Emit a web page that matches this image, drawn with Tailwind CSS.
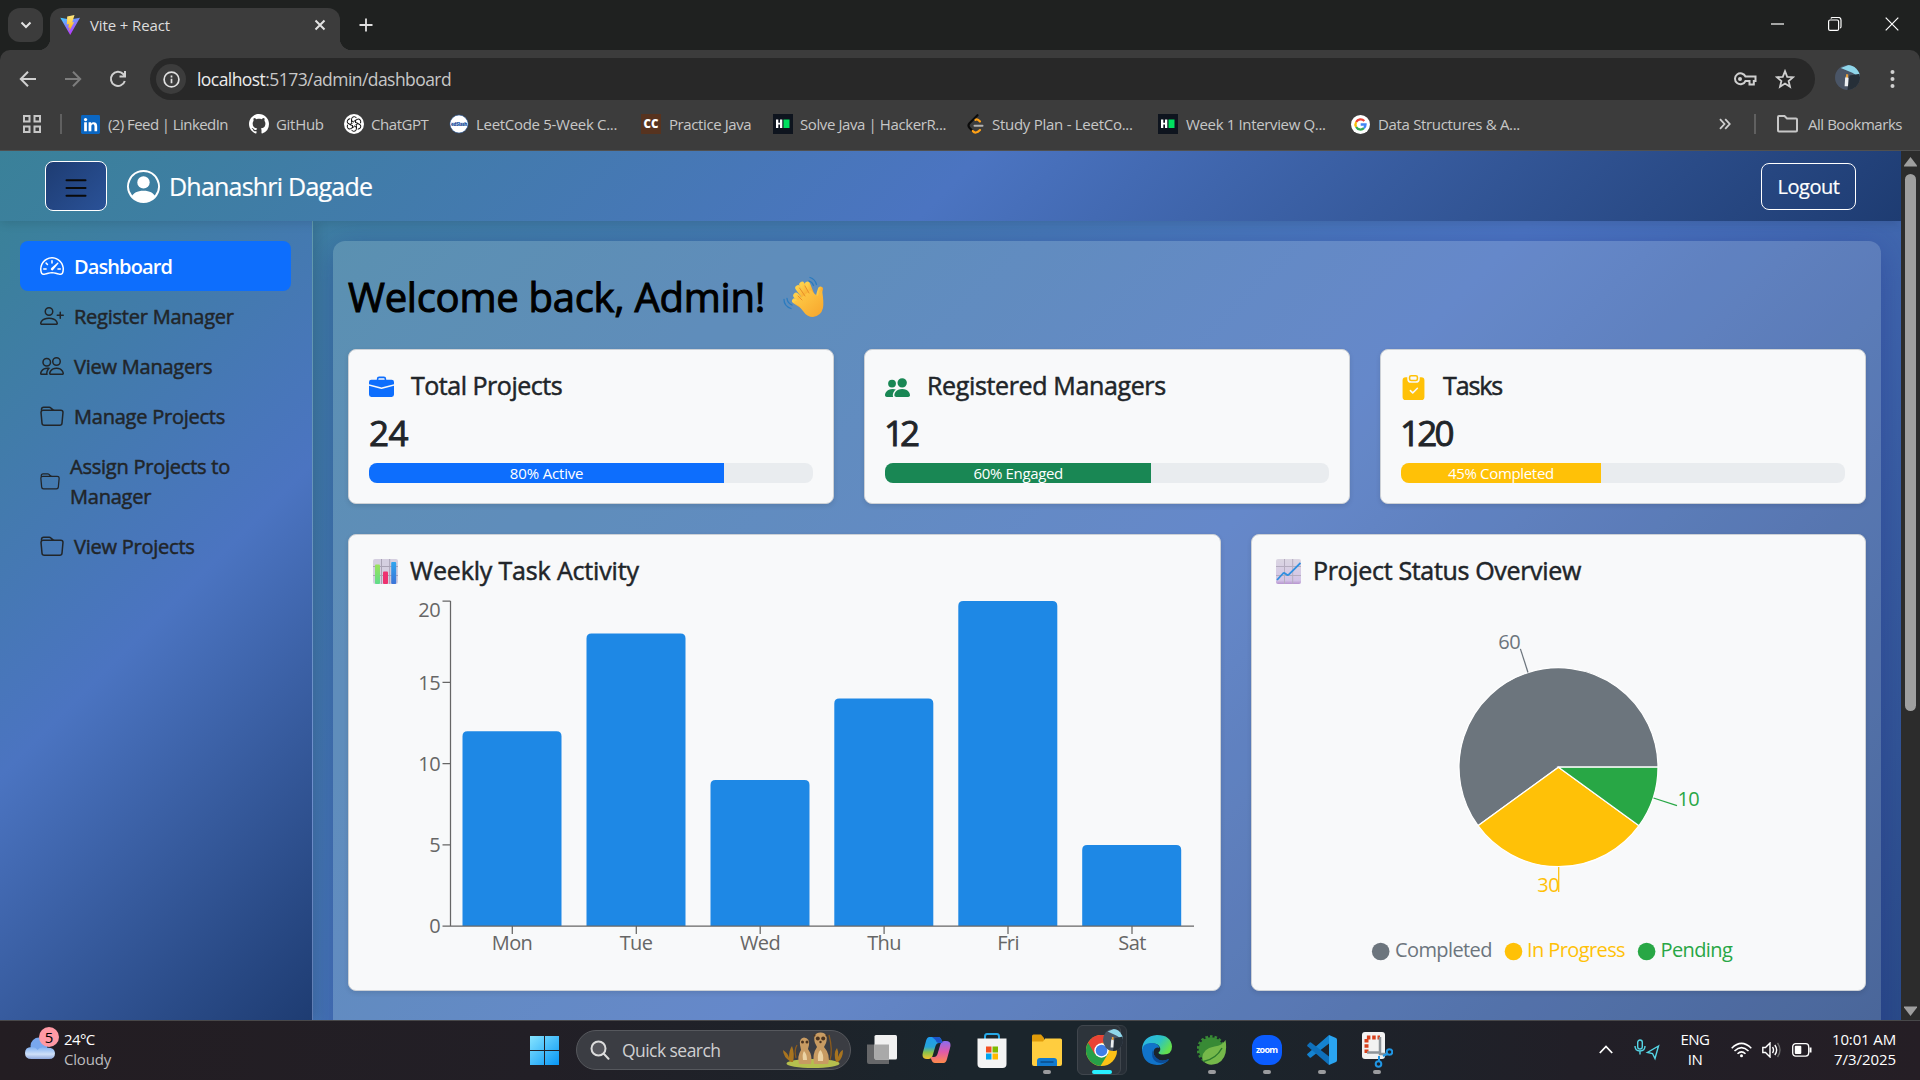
<!DOCTYPE html>
<html lang="en">
<head>
<meta charset="utf-8">
<title>Vite + React</title>
<script src="https://cdn.jsdelivr.net/npm/@tailwindcss/browser@4"></script>
</head>
<body class="w-[1920px] h-[1080px] overflow-hidden bg-[#1f2120] font-['Open_Sans',sans-serif]">
<svg width="0" height="0" class="absolute" aria-hidden="true">
  <defs>
    <symbol id="folder" viewBox="0 0 16 16"><path d="M.54 3.87.5 3a2 2 0 0 1 2-2h3.672a2 2 0 0 1 1.414.586l.828.828A2 2 0 0 0 9.828 3h3.982a2 2 0 0 1 1.992 2.181l-.637 7A2 2 0 0 1 13.174 14H2.826a2 2 0 0 1-1.991-1.819l-.637-7a2 2 0 0 1 .342-1.31zM2.19 4a1 1 0 0 0-.996 1.09l.637 7a1 1 0 0 0 .995.91h10.348a1 1 0 0 0 .995-.91l.637-7A1 1 0 0 0 13.81 4zm4.69-1.707A1 1 0 0 0 6.172 2H2.5a1 1 0 0 0-1 .981l.006.139q.323-.119.684-.12h5.396z"/></symbol>
    <symbol id="hackerrank" viewBox="0 0 20 20"><rect width="20" height="20" fill="#0e141e"/><path d="M3 5.500h2.300v3.200h1.700v-3.200h2.300v8.500h-2.300v-3.400h-1.700v3.400h-2.300z" fill="#fff"/><rect x="10.500" y="5.500" width="6" height="8.500" fill="#00e05f"/></symbol>
    <symbol id="avatar" viewBox="0 0 26 26"><clipPath id="avc"><circle cx="13" cy="13" r="13"/></clipPath><g clip-path="url(#avc)"><rect width="26" height="26" fill="#4a5566"/><path d="M6 3 14 0h12v13l-8-5z" fill="#8fd6ea"/><path d="M15 11 26 9v17H13z" fill="#262f38"/><path d="M10.500 14q1.500-5 3.500 0l-.5 8h-3.500z" fill="#eceff1"/><path d="M11.500 9.500h2.200v3.500h-2.200z" fill="#e9a13b"/></g></symbol>
  </defs>
</svg>
<div class="flex flex-col w-full h-full">

  <!-- Tab strip -->
  <div class="flex h-[50px] shrink-0 pl-2 pt-2 text-[#dedede]">
    <div class="w-[35px] h-[34px] rounded-xl bg-[#3c3c3c] grid place-items-center"><svg width="12" height="8" viewBox="0 0 12 8" fill="none" stroke="#e3e3e3" stroke-width="2"><path d="M1.500 1.500 6 6l4.500-4.500"/></svg></div>
    <div class="relative ml-[7px] w-[290px] h-[42px] rounded-t-xl bg-[#3c3c3c] flex items-center pl-2.5 pr-[14px] pb-2">
      <div class="absolute -left-3 bottom-0 size-3 bg-[radial-gradient(circle_at_0_0,transparent_12px,#3c3c3c_12.500px)]"></div>
      <div class="absolute -right-3 bottom-0 size-3 bg-[radial-gradient(circle_at_100%_0,transparent_12px,#3c3c3c_12.500px)]"></div>
      <svg width="20" height="20" viewBox="0 0 20 20"><defs><linearGradient id="v1" x1="0" y1="0" x2=".5" y2="1"><stop stop-color="#41d1ff"/><stop offset="1" stop-color="#bd34fe"/></linearGradient><linearGradient id="v2" x1="0" y1="0" x2="0" y2="1"><stop stop-color="#ffea83"/><stop offset="1" stop-color="#ffa800"/></linearGradient></defs><path d="M.3 2.700 10.200 20 20 2.700 10.200 4.500z" fill="url(#v1)"/><path d="M14.500 0 7.200 1.400 6.800 9.500l2.100-.4-.6 3.700 1.500-.4-.8 4.200 5.200-9.600-2 .4z" fill="url(#v2)"/></svg>
      <span class="ml-2.5 text-[15px] tracking-[-.12px]">Vite + React</span>
      <svg class="ml-auto" width="12" height="12" viewBox="0 0 12 12" stroke="#e3e3e3" stroke-width="2"><path d="m1.500 1.500 9 9m0-9-9 9"/></svg>
    </div>
    <svg class="ml-[19px] mt-[10px]" width="14" height="14" viewBox="0 0 14 14" stroke="#e0e0e0" stroke-width="1.800"><path d="M7 .5v13M.5 7h13"/></svg>
    <div class="ml-auto flex gap-[43px] pr-[21px] pt-[9px]" >
      <svg width="14" height="14" viewBox="0 0 14 14"><path d="M0 7h13" stroke="#fff" stroke-width="1.200"/></svg>
      <svg width="14" height="14" viewBox="0 0 14 14" fill="none" stroke="#fff" stroke-width="1.200"><rect x=".6" y="3" width="10" height="10.400" rx="1.500"/><path d="M3 1.500q.3-1 1.500-1h6q2.500 0 2.500 2.500v6.500q0 1.500-1 1.500"/></svg>
      <svg width="14" height="14" viewBox="0 0 14 14" stroke="#fff" stroke-width="1.200"><path d="m.7.7 12.600 12.600m0-12.600L.7 13.300"/></svg>
    </div>
  </div>

  <!-- Toolbar -->
  <div class="flex h-[54px] shrink-0 items-start pt-2 pl-[19px] bg-[#3c3c3c] rounded-t-[10px]">
    <div class="flex items-center h-[42px] gap-[27px]">
      <svg width="18" height="18" viewBox="0 0 18 18" fill="none" stroke="#d0d0d0" stroke-width="2"><path d="M17 9H2.500M9 1.700 1.800 9 9 16.300"/></svg>
      <svg width="18" height="18" viewBox="0 0 18 18" fill="none" stroke="#7d7d7d" stroke-width="2"><path d="M1 9h14.500M9 1.700 16.200 9 9 16.300"/></svg>
      <svg width="18" height="18" viewBox="0 0 18 18" fill="none" stroke="#d0d0d0" stroke-width="2"><path d="M15.800 11A7.100 7.100 0 1 1 14.200 4l2 2.200M16 1v5.500h-5.500"/></svg>
    </div>
    <div class="ml-[23px] w-[1665px] h-[42px] rounded-full bg-[#282828] flex items-center pl-1.5 pr-[20px]">
      <div class="size-[30px] rounded-full bg-[#3c3c3c] grid place-items-center"><svg width="17" height="17" viewBox="0 0 17 17" fill="none" stroke="#e0e0e0" stroke-width="1.700"><circle cx="8.500" cy="8.500" r="7.400"/><path d="M8.500 7.700v4.600M8.500 4.500v1.900"/></svg></div>
      <div class="ml-[11px] text-[17.5px] tracking-[-.56px] text-[#c7c7c7] whitespace-nowrap"><span class="text-[#ececec]">localhost</span>:5173/admin/dashboard</div>
      <svg class="ml-auto" width="24" height="18" viewBox="0 0 24 18" fill="none" stroke="#d0d0d0" stroke-width="2"><path d="M12.500 6.500h10v4.500h-1.700v3.500h-4.300V11h-4a5.500 5.500 0 1 1 0-4.500z"/><circle cx="7" cy="9" r="2" fill="#d0d0d0" stroke="none"/></svg>
      <svg class="ml-[18px]" width="20" height="20" viewBox="0 0 20 20" fill="none" stroke="#d0d0d0" stroke-width="1.800"><path d="m10 2.200 2.200 5.600 5.900.4-4.500 3.800 1.400 5.800-5-3.200-5 3.200L6.400 12 1.900 8.200l5.900-.4z"/></svg>
    </div>
    <svg class="ml-5 mt-[7px]" width="25" height="25"><use href="#avatar"/></svg>
    <svg class="ml-[30px] mt-[11px]" width="5" height="20" viewBox="0 0 5 20" fill="#d0d0d0"><circle cx="2.500" cy="3" r="2"/><circle cx="2.500" cy="10" r="2"/><circle cx="2.500" cy="17" r="2"/></svg>
  </div>

  <!-- Bookmarks bar -->
  <div class="flex h-[47px] shrink-0 items-center pb-1.5 pl-[23px] pr-[18px] bg-[#3c3c3c] border-b border-[#505050] text-[15px] text-[#c7c7c7] whitespace-nowrap">
    <svg width="18" height="18" viewBox="0 0 18 18" fill="none" stroke="#c7c7c7" stroke-width="2"><path d="M1 1h5.500v5.500H1zM11.500 1H17v5.500h-5.500zM1 11.500h5.500V17H1zM11.500 11.500H17V17h-5.500z"/></svg>
    <div class="ml-[19px] mr-[19px] w-0.5 h-5 bg-[#606060]"></div>
    <div class="flex items-center gap-2 w-[168px] tracking-[-.57px]"><svg width="19" height="19" viewBox="0 0 20 20"><rect width="20" height="20" rx="1.500" fill="#0a66c2"/><g fill="#fff"><circle cx="4.800" cy="4.800" r="1.700"/><path d="M3.300 7.700h2.900V17H3.300zM8 7.700h2.700v1.300c1.300-2.300 6.300-2.200 6.300 2.200V17h-2.800v-5c0-3-3.300-2.700-3.300 0v5H8z"/></g></svg>(2) Feed | LinkedIn</div>
    <div class="flex items-center gap-[7px] w-[95px] tracking-[-.3px]"><svg width="20" height="20" viewBox="0 0 16 16" fill="#fff"><path d="M8 0C3.580 0 0 3.580 0 8c0 3.540 2.290 6.530 5.470 7.590.4.070.55-.17.55-.38 0-.19-.01-.82-.01-1.490-2.010.37-2.530-.49-2.690-.94-.09-.23-.48-.94-.82-1.130-.28-.15-.68-.52-.01-.53.63-.01 1.080.58 1.230.82.72 1.210 1.870.87 2.330.66.07-.52.28-.87.51-1.070-1.780-.2-3.640-.89-3.640-3.950 0-.87.31-1.590.82-2.150-.08-.2-.36-1.020.08-2.120 0 0 .67-.21 2.200.82.64-.18 1.320-.27 2-.27s1.360.09 2 .27c1.530-1.040 2.200-.82 2.200-.82.44 1.100.16 1.920.08 2.120.51.56.82 1.270.82 2.150 0 3.070-1.870 3.750-3.650 3.950.29.25.54.73.54 1.480 0 1.070-.01 1.930-.01 2.200 0 .21.15.46.55.38A8 8 0 0 0 16 8c0-4.420-3.580-8-8-8"/></svg>GitHub</div>
    <div class="flex items-center gap-[7px] w-[105px] tracking-[-.45px]"><svg width="20" height="20" viewBox="0 0 20 20"><circle cx="10" cy="10" r="10" fill="#fff"/><g fill="none" stroke="#111" stroke-width="1"><g id="petal"><path d="M10 8.200 7.600 6.800V4.900q.3-2.600 3-2.200 1.300.3 2 1.500M7.600 8.800V6"/></g><use href="#petal" transform="rotate(60 10 10)"/><use href="#petal" transform="rotate(120 10 10)"/><use href="#petal" transform="rotate(180 10 10)"/><use href="#petal" transform="rotate(240 10 10)"/><use href="#petal" transform="rotate(300 10 10)"/></g></svg>ChatGPT</div>
    <div class="flex items-center gap-[7px] w-[192px] tracking-[-.3px]"><svg width="20" height="20" viewBox="0 0 20 20"><circle cx="10" cy="10" r="9" fill="#fff" stroke="#2d5fa4" stroke-width=".6"/><path d="M1.500 8.200h17v3h-17z" fill="#dce9f7"/><text x="10" y="11.500" text-anchor="middle" font-size="4.500" font-weight="800" fill="#1d4e9c">edSlash</text></svg>LeetCode 5-Week C...</div>
    <div class="flex items-center gap-2 w-[132px] tracking-[-.4px]"><svg width="20" height="20" viewBox="0 0 20 20"><rect width="20" height="20" fill="#57331f"/><text x="10" y="14" text-anchor="middle" font-size="11.500" font-weight="800" fill="#fff" letter-spacing="0">CC</text></svg>Practice Java</div>
    <div class="flex items-center gap-[7px] w-[193px] tracking-[-.4px]"><svg width="20" height="20"><use href="#hackerrank"/></svg>Solve Java | HackerR...</div>
    <div class="flex items-center gap-[6px] w-[192px] tracking-[-.27px]"><svg width="20" height="20" viewBox="0 0 20 20" fill="none" stroke-width="2.200" stroke-linecap="round"><path d="M11.500 1.200 3.500 9.300Q1.500 11.500 3.500 13.800l3 3.200" stroke="#0b0b0b"/><path d="M9.500 5.800q2-1.300 4.500 1.700M6.700 17q3 3.500 7.300-1" stroke="#ffa116"/><path d="M8.500 11.700h8" stroke="#b3b3b3" stroke-width="2"/></svg>Study Plan - LeetCo...</div>
    <div class="flex items-center gap-2 w-[193px] tracking-[-.35px]"><svg width="20" height="20"><use href="#hackerrank"/></svg>Week 1 Interview Q...</div>
    <div class="flex items-center gap-2 tracking-[-.33px]"><svg width="19" height="19" viewBox="0 0 20 20" fill="none" stroke-width="2.400"><circle cx="10" cy="10" r="10" fill="#fff"/><path d="M14 6.300A5.300 5.300 0 0 0 5.400 7.400" stroke="#ea4335"/><path d="M5.400 7.400a5.300 5.300 0 0 0 0 5.200" stroke="#fbbc05"/><path d="M5.400 12.600a5.300 5.300 0 0 0 8.200 1.300" stroke="#34a853"/><path d="M13.600 13.900A5.300 5.300 0 0 0 15.300 10H10.200" stroke="#4285f4"/></svg>Data Structures &amp; A...</div>
    <svg class="ml-auto" width="12" height="12" viewBox="0 0 12 12" fill="none" stroke="#d0d0d0" stroke-width="1.800"><path d="m1 1.200 4.500 4.800L1 10.800M6.200 1.200 10.700 6l-4.500 4.800"/></svg>
    <div class="ml-[23px] mr-[21px] w-0.5 h-5 bg-[#606060]"></div>
    <svg class="mr-2.5" width="21" height="18" viewBox="0 0 21 18" fill="none" stroke="#c7c7c7" stroke-width="2"><path d="M1 2q0-1 1-1h5.500l2.500 2.500h9q1 0 1 1V15.500q0 1-1 1H2q-1 0-1-1z"/></svg>
    <span class="tracking-[-.46px]">All Bookmarks</span>
  </div>

  <!-- Web page -->
  <div class="flex h-[869px] shrink-0">
    <div class="w-[1901px] h-full flex flex-col overflow-hidden bg-[linear-gradient(135deg,#3a8199_0px,#4b74c1_1134px,#1e3c72_2268px)]">
      <header class="relative z-20 h-[70px] shrink-0 flex items-center px-[45px] text-white bg-[linear-gradient(135deg,#3a8199,#4b74c1,#1e3c72)] shadow-[0_2px_10px_rgba(0,0,0,.12)]">
        <button class="w-[62px] h-[50px] rounded-lg border border-white bg-[linear-gradient(135deg,#1e3c72,#2a5298)] grid place-items-center"><svg class="mt-1" width="22" height="18" viewBox="0 0 22 18" stroke="#0a0a0a" stroke-width="2" stroke-linecap="round"><path d="M1.500 1.200h19M1.500 9h19M1.500 16.800h19"/></svg></button>
        <svg class="ml-5" width="33" height="33" viewBox="0 0 16 16" fill="#fff"><path d="M11 6a3 3 0 1 1-6 0 3 3 0 0 1 6 0"/><path fill-rule="evenodd" d="M0 8a8 8 0 1 1 16 0A8 8 0 0 1 0 8m8-7a7 7 0 0 0-5.468 11.370C3.242 11.226 4.805 10 8 10s4.757 1.225 5.468 2.370A7 7 0 0 0 8 1"/></svg>
        <span class="ml-[9px] text-[25px] tracking-[-.78px] pt-0.5 [-webkit-text-stroke:0.2px]">Dhanashri Dagade</span>
        <button class="ml-auto w-[95px] h-[47px] pt-0.5 rounded-lg border border-white text-[20px] tracking-[-.46px] [-webkit-text-stroke:0.2px]">Logout</button>
      </header>
      <div class="flex flex-1 min-h-0">
        <nav class="relative z-10 w-[313px] shrink-0 border-r border-white/20 px-5 pt-5 bg-[linear-gradient(135deg,#3a8199,#4b74c1,#1e3c72)] shadow-[4px_0_12px_rgba(0,0,0,.12)] text-[20px] leading-[30px] font-medium tracking-[-.23px] text-[#212529] fill-[#212529] [-webkit-text-stroke:0.5px]">
          <a class="flex items-center gap-2.5 h-[50px] w-[271px] px-5 rounded-lg bg-[#0d6efd] text-white fill-white font-semibold tracking-[-.9px] [-webkit-text-stroke:0px]"><svg width="24" height="24" viewBox="0 0 16 16"><path d="M8 4a.5.5 0 0 1 .5.5V6a.5.5 0 0 1-1 0V4.500A.5.5 0 0 1 8 4M3.732 5.732a.5.5 0 0 1 .707 0l.915.914a.5.5 0 1 1-.708.708l-.914-.915a.5.5 0 0 1 0-.707M2 10a.5.5 0 0 1 .5-.5h1.586a.5.5 0 0 1 0 1H2.500A.5.5 0 0 1 2 10m9.500 0a.5.5 0 0 1 .5-.5h1.500a.5.5 0 0 1 0 1H12a.5.5 0 0 1-.5-.5m.754-4.246a.39.39 0 0 0-.527-.02L7.547 9.310a.91.91 0 1 0 1.302 1.258l3.434-4.297a.39.39 0 0 0-.029-.518z"/><path fill-rule="evenodd" d="M0 10a8 8 0 1 1 15.547 2.661c-.442 1.253-1.845 1.602-2.932 1.250C11.309 13.488 9.475 13 8 13c-1.474 0-3.310.488-4.615.911-1.087.352-2.490.003-2.932-1.250A8 8 0 0 1 0 10m8-7a7 7 0 0 0-6.603 9.329c.203.575.923.876 1.680.63C4.397 12.533 6.358 12 8 12s3.604.532 4.923.96c.757.245 1.477-.056 1.680-.631A7 7 0 0 0 8 3"/></svg><span class="pt-0.5">Dashboard</span></a>
          <a class="flex items-center gap-2.5 h-[50px] px-5"><svg width="24" height="24" viewBox="0 0 16 16"><path d="M6 8a3 3 0 1 0 0-6 3 3 0 0 0 0 6m2-3a2 2 0 1 1-4 0 2 2 0 0 1 4 0m4 8c0 1-1 1-1 1H1s-1 0-1-1 1-4 6-4 6 3 6 4m-1-.004c-.001-.246-.154-.986-.832-1.664C9.516 10.680 8.289 10 6 10s-3.516.68-4.168 1.332c-.678.678-.83 1.418-.832 1.664z"/><path d="M13.500 5a.5.5 0 0 1 .5.5V7h1.500a.5.5 0 0 1 0 1H14v1.500a.5.5 0 0 1-1 0V8h-1.500a.5.5 0 0 1 0-1H13V5.500a.5.5 0 0 1 .5-.5"/></svg><span class="pt-0.5">Register Manager</span></a>
          <a class="flex items-center gap-2.5 h-[50px] px-5"><svg width="24" height="24" viewBox="0 0 16 16"><path d="M15 14s1 0 1-1-1-4-5-4-5 3-5 4 1 1 1 1zm-7.978-1L7 12.996c.001-.264.167-1.030.76-1.720C8.312 10.629 9.282 10 11 10c1.717 0 2.687.63 3.240 1.276.593.69.758 1.457.76 1.720l-.008.002-.014.002zM11 7a2 2 0 1 0 0-4 2 2 0 0 0 0 4m3-2a3 3 0 1 1-6 0 3 3 0 0 1 6 0M6.936 9.280a6 6 0 0 0-1.230-.247A7 7 0 0 0 5 9c-4 0-5 3-5 4q0 1 1 1h4.216A2.240 2.240 0 0 1 5 13c0-1.010.377-2.042 1.090-2.904.243-.294.526-.569.846-.816M4.920 10A5.500 5.500 0 0 0 4 13H1c0-.26.164-1.030.76-1.724.545-.636 1.492-1.256 3.160-1.275ZM1.500 5.500a3 3 0 1 1 6 0 3 3 0 0 1-6 0m3-2a2 2 0 1 0 0 4 2 2 0 0 0 0-4"/></svg><span class="pt-0.5">View Managers</span></a>
          <a class="flex items-center gap-2.5 h-[50px] px-5"><svg class="mt-0.5" width="24" height="24"><use href="#folder"/></svg><span class="pt-0.5">Manage Projects</span></a>
          <a class="flex items-center gap-2.5 h-20 px-5"><svg class="shrink-0 mt-0.5" width="20" height="20"><use href="#folder"/></svg><span class="pt-0.5">Assign Projects to<br>Manager</span></a>
          <a class="flex items-center gap-2.5 h-[50px] px-5"><svg class="mt-0.5" width="24" height="24"><use href="#folder"/></svg><span class="pt-0.5">View Projects</span></a>
        </nav>
        <main class="flex-1 min-w-0 pt-5 px-5 text-[#212529] font-medium">
          <section class="h-[860px] rounded-xl bg-white/15 px-[15px] pt-8 shadow-[0_8px_32px_rgba(31,38,135,.37)]">
            <h1 class="h-12 flex items-center text-[40px] leading-[48px] tracking-[-.26px] text-black [-webkit-text-stroke:1px]">Welcome back, Admin! <span class="ml-[18px]">
              <svg width="41" height="42" viewBox="0 0 41 42" fill="none" stroke-linecap="round"><defs><linearGradient id="hg" x1="0" y1="0" x2="1" y2="1"><stop stop-color="#ffd04a"/><stop offset="1" stop-color="#f7a42c"/></linearGradient></defs><g stroke="#2b7bbf" stroke-width="1.300"><path d="M27 1.500q5 1.500 6.500 7M26 5q3.500 1 4.500 4.500M1 23.500q0 6.500 7 9M4 22.500q.5 4.500 5 6.500"/></g><g stroke="url(#hg)"><path d="m20 27-7-7.500" stroke-width="5.500"/><path d="m23 23-8-11" stroke-width="5.500"/><path d="m26 20-7-11.500" stroke-width="5.500"/><path d="m29 19-4.500-11" stroke-width="5"/><path d="M35 23q1-6 2.500-10" stroke-width="5"/><path d="m19 30-7.500-5" stroke-width="5"/></g><path d="M15 24 28 14q4 5 7 6l4-6q2 12 1 18-2 8-10 9-6 0-10-6-3-5-9-9z" fill="url(#hg)"/><g stroke="#e8902a" stroke-width="1"><path d="m22 20-5.500-8M26 17l-4-7M19 24l-4-4"/></g></svg></span></h1>
            <div class="mt-7 grid grid-cols-3 gap-[30px]">
              <div class="h-[155px] rounded-lg border border-[#cdd1d6] bg-[#f8f9fa] p-5 shadow-[0_2px_5px_rgba(0,0,0,.1)]">
                <h5 class="flex items-center text-[25px] leading-[30px] tracking-[-.48px] [-webkit-text-stroke:0.5px]"><svg class="mt-[5px] mr-[17px]" width="25" height="25" viewBox="0 0 16 16" fill="#0d6efd"><path d="M6.500 1A1.500 1.500 0 0 0 5 2.500V3H1.500A1.500 1.500 0 0 0 0 4.500v1.384l7.614 2.030a1.500 1.500 0 0 0 .772 0L16 5.884V4.500A1.500 1.500 0 0 0 14.500 3H11v-.5A1.500 1.500 0 0 0 9.500 1zm0 1h3a.5.5 0 0 1 .5.5V3H6v-.5a.5.5 0 0 1 .5-.5"/><path d="M0 12.500A1.500 1.500 0 0 0 1.500 14h13a1.500 1.500 0 0 0 1.500-1.500V6.850L8.129 8.947a.5.5 0 0 1-.258 0L0 6.850z"/></svg>Total Projects</h5>
                <div class="mt-3 text-[35px] leading-[42px] tracking-[-.5px] [-webkit-text-stroke:0.9px]">24</div>
                <div class="mt-[9px] h-5 rounded-lg bg-[#e9ecef] overflow-hidden"><div class="h-full bg-[#0d6efd] text-white text-[15px] leading-5 font-normal text-center tracking-[-.17px]" style="width:80%">80% Active</div></div>
              </div>
              <div class="h-[155px] rounded-lg border border-[#cdd1d6] bg-[#f8f9fa] p-5 shadow-[0_2px_5px_rgba(0,0,0,.1)]">
                <h5 class="flex items-center text-[25px] leading-[30px] tracking-[-.36px] [-webkit-text-stroke:0.5px]"><svg class="mt-[5px] mr-[17px]" width="25" height="25" viewBox="0 0 16 16" fill="#198754"><path d="M7 14s-1 0-1-1 1-4 5-4 5 3 5 4-1 1-1 1zm4-6a3 3 0 1 0 0-6 3 3 0 0 0 0 6m-5.784 6A2.240 2.240 0 0 1 5 13c0-1.355.68-2.750 1.936-3.720A6.300 6.300 0 0 0 5 9c-4 0-5 3-5 4s1 1 1 1zM4.500 8a2.500 2.500 0 1 0 0-5 2.500 2.500 0 0 0 0 5"/></svg>Registered Managers</h5>
                <div class="mt-3 -ml-px text-[35px] leading-[42px] tracking-[-4px] [-webkit-text-stroke:0.9px]">12</div>
                <div class="mt-[9px] h-5 rounded-lg bg-[#e9ecef] overflow-hidden"><div class="h-full bg-[#198754] text-white text-[15px] leading-5 font-normal text-center tracking-[-.33px]" style="width:60%">60% Engaged</div></div>
              </div>
              <div class="h-[155px] rounded-lg border border-[#cdd1d6] bg-[#f8f9fa] p-5 shadow-[0_2px_5px_rgba(0,0,0,.1)]">
                <h5 class="flex items-center text-[25px] leading-[30px] tracking-[-1.1px] [-webkit-text-stroke:0.5px]"><svg class="mt-[5px] mr-[17px]" width="25" height="25" viewBox="0 0 16 16" fill="#ffc107"><path d="M6.500 0A1.500 1.500 0 0 0 5 1.500v1A1.500 1.500 0 0 0 6.500 4h3A1.500 1.500 0 0 0 11 2.500v-1A1.500 1.500 0 0 0 9.500 0zm3 1a.5.5 0 0 1 .5.5v1a.5.5 0 0 1-.5.5h-3a.5.5 0 0 1-.5-.5v-1a.5.5 0 0 1 .5-.5z"/><path d="M4 1.500H3a2 2 0 0 0-2 2V14a2 2 0 0 0 2 2h10a2 2 0 0 0 2-2V3.500a2 2 0 0 0-2-2h-1v1A2.500 2.500 0 0 1 9.500 5h-3A2.500 2.500 0 0 1 4 2.500zm6.854 7.354-3 3a.5.5 0 0 1-.708 0l-1.500-1.500a.5.5 0 0 1 .708-.708L7.500 10.793l2.646-2.647a.5.5 0 0 1 .708.708"/></svg>Tasks</h5>
                <div class="mt-3 -ml-px text-[35px] leading-[42px] tracking-[-2.7px] [-webkit-text-stroke:0.9px]">120</div>
                <div class="mt-[9px] h-5 rounded-lg bg-[#e9ecef] overflow-hidden"><div class="h-full bg-[#ffc107] text-white text-[15px] leading-5 font-normal text-center tracking-[-.33px]" style="width:45%">45% Completed</div></div>
              </div>
            </div>
            <div class="mt-[30px] flex gap-[30px]">
              <div class="w-[873px] h-[457px] rounded-lg border border-[#cdd1d6] bg-[#f8f9fa] p-5 shadow-[0_2px_5px_rgba(0,0,0,.1)]">
                <h5 class="flex items-center text-[25px] leading-[30px] tracking-[-.16px] pl-1 [-webkit-text-stroke:0.5px]"><svg class="mr-3 mt-0.5" width="25" height="25" viewBox="0 0 25 25"><defs><linearGradient id="bg1" x1="0" y1="0" x2="0" y2="1"><stop stop-color="#9be35a"/><stop offset="1" stop-color="#5fdc8a"/></linearGradient><linearGradient id="bg2" x1="0" y1="0" x2="0" y2="1"><stop stop-color="#2fa5ee"/><stop offset="1" stop-color="#3c74d8"/></linearGradient></defs><rect width="25" height="25" rx="2" fill="#d5cfe0"/><path d="M0 7.500h25M0 16.500h25M8.500 0v25M16.700 0v25" stroke="#aaa3b5"/><rect x="2" y="5.500" width="5" height="19.500" rx="1" fill="url(#bg1)"/><rect x="10" y="12.500" width="5" height="12.500" rx="1" fill="#ee3270"/><rect x="18.200" y="3" width="5" height="22" rx="1" fill="url(#bg2)"/></svg>Weekly Task Activity</h5>
                <svg class="mt-2.5" width="831" height="375" viewBox="369 595 831 375" font-size="20" font-weight="400" fill="#666" letter-spacing="-.6">
                  <g fill="#1e88e5"><path d="M462.500 926V736.300q0-5 5-5h89q5 0 5 5V926zM586.500 926V638.500q0-5 5-5h89q5 0 5 5V926zM710.500 926V785q0-5 5-5h89q5 0 5 5V926zM834.300 926V703.500q0-5 5-5h89q5 0 5 5V926zM958.300 926V606q0-5 5-5h89q5 0 5 5V926zM1082.200 926V850q0-5 5-5h89q5 0 5 5V926z"/></g>
                  <path d="M450.500 601V926.200M442.500 601h8M442.500 682.300h8M442.500 763.600h8M442.500 844.900h8M442.500 926.200H1194M512.300 926v8M636.300 926v8M760.200 926v8M884.100 926v8M1008 926v8M1132 926v8" fill="none" stroke="#666" stroke-width="1.250"/>
                  <g text-anchor="end"><text x="440" y="616.500">20</text><text x="440" y="689.500">15</text><text x="440" y="771">10</text><text x="440" y="852">5</text><text x="440" y="933">0</text></g>
                  <g text-anchor="middle"><text x="512" y="950">Mon</text><text x="636" y="950">Tue</text><text x="760" y="950">Wed</text><text x="884" y="950">Thu</text><text x="1008" y="950">Fri</text><text x="1132" y="950">Sat</text></g>
                </svg>
              </div>
              <div class="flex-1 h-[457px] rounded-lg border border-[#cdd1d6] bg-[#f8f9fa] p-5 shadow-[0_2px_5px_rgba(0,0,0,.1)]">
                <h5 class="flex items-center text-[25px] leading-[30px] tracking-[-.33px] pl-1 [-webkit-text-stroke:0.5px]"><svg class="mr-3 mt-0.5" width="25" height="25" viewBox="0 0 25 25"><defs><linearGradient id="cg" x1="0" y1="0" x2="0" y2="1"><stop stop-color="#dbd6e2"/><stop offset=".85" stop-color="#d3c4e6"/><stop offset="1" stop-color="#b795d0"/></linearGradient></defs><rect width="25" height="25" rx="2" fill="url(#cg)"/><path d="M0 7.500h25M0 16.500h25M8.500 0v25M16.700 0v25" stroke="#b5adc0"/><path d="m1 21 6-6.500q1-1 2.200 0l1.300 1q1.300 1 2.500-.2L24.500 4" fill="none" stroke="#2f8fdf" stroke-width="1.800"/></svg>Project Status Overview</h5>
                <svg class="mt-2.5" width="573" height="375" viewBox="1272 595 573 375" font-size="20" font-weight="400" letter-spacing="-.6">
                  <g stroke="#fff" stroke-width="1.250"><path d="M1558.500 767.200H1658A99.500 99.500 0 1 0 1478 825.700z" fill="#6c757d"/><path d="M1558.500 767.200 1478 825.700A99.500 99.500 0 0 0 1639 825.700z" fill="#ffc107"/><path d="M1558.500 767.200 1639 825.700A99.500 99.500 0 0 0 1658 767.200z" fill="#28a745"/></g>
                  <g fill="none" stroke-width="1.250"><path d="m1528 672.500-7.600-23.600" stroke="#6c757d"/><path d="M1558.700 867v25" stroke="#ffc107"/><path d="m1653.500 798 23.500 7.700" stroke="#28a745"/></g>
                  <text x="1520" y="649" text-anchor="end" fill="#6c757d">60</text><text x="1559" y="892" text-anchor="end" fill="#ffc107">30</text><text x="1677.500" y="806" fill="#28a745">10</text>
                  <g fill="#6c757d"><circle cx="1380.700" cy="951.500" r="8.800"/><text x="1395" y="957">Completed</text></g>
                  <g fill="#ffc107"><circle cx="1513.500" cy="951.500" r="8.800"/><text x="1527" y="957">In Progress</text></g>
                  <g fill="#28a745"><circle cx="1646.600" cy="951.500" r="8.800"/><text x="1660.500" y="957">Pending</text></g>
                </svg>
              </div>
            </div>
          </section>
        </main>
      </div>
    </div>
    <!-- Scrollbar -->
    <div class="flex flex-col items-center w-[19px] h-full bg-[#2c2c2c] pt-1.5 pb-1">
      <svg width="13" height="10" viewBox="0 0 13 10" fill="#9f9f9f"><path d="M6.500 0 13 8.500v1H0v-1z"/></svg>
      <div class="mt-[7px] w-[11px] h-[537px] rounded-full bg-[#9f9f9f]"></div>
      <svg class="mt-auto" width="13" height="10" viewBox="0 0 13 10" fill="#9f9f9f"><path d="M6.500 10 13 1.500V.5H0v1z"/></svg>
    </div>
  </div>

  <!-- Taskbar -->
  <div class="flex h-[60px] shrink-0 items-center border-t border-[#48484a] pb-px bg-[linear-gradient(90deg,#231d22_0%,#221f26_28%,#1b252c_50%,#1b252c_62%,#211f27_82%,#251e25_100%)] text-[15px] leading-5 text-white">
    <div class="relative ml-[25px] w-[39px] h-[40px]">
      <svg class="mt-1" width="31" height="28" viewBox="0 0 31 28"><defs><linearGradient id="cl" x1="0" y1="0" x2="0" y2="1"><stop stop-color="#7fb0f2"/><stop offset=".6" stop-color="#cfe0f8"/><stop offset="1" stop-color="#8fa9dd"/></linearGradient></defs><circle cx="14" cy="12" r="8.500" fill="#78a7ee"/><path d="M6.500 13q4 0 6 3 3-4 8-2 9-1 9.500 5 0 6-6 6H6.500q-6.500 0-6.500-6t6.500-6z" fill="url(#cl)"/></svg>
      <span class="absolute -top-[3px] left-[14px] size-5 rounded-full bg-[#ff99a4] text-black text-center leading-5 text-[15px]">5</span>
    </div>
    <div class="pb-[3px] w-[47px] tracking-[-.2px]"><span class="tracking-[-.6px]">24°C</span><br><span class="text-[#bcbcbe]">Cloudy</span></div>
    <svg class="ml-[419px]" width="29" height="29" viewBox="0 0 29 29"><defs><linearGradient id="wg" x1="0" y1="0" x2="1" y2="1"><stop stop-color="#86e4ff"/><stop offset="1" stop-color="#0796f5"/></linearGradient></defs><path d="M0 0h14v14H0zM15 0h14v14H15zM0 15h14v14H0zM15 15h14v14H15z" fill="url(#wg)"/></svg>
    <div class="ml-[17px] w-[275px] h-10 rounded-full border border-[#56585d] bg-[#3b3d43] flex items-center pl-[13px] pr-1.5">
      <svg width="20" height="20" viewBox="0 0 20 20" fill="#ffffff22" stroke="#dcdcdc" stroke-width="2" stroke-linecap="round"><circle cx="8.500" cy="8.500" r="7"/><path d="m13.800 13.800 4.700 5"/></svg>
      <span class="ml-[12px] text-[17.5px] tracking-[-.55px] text-[#cfcfd1]">Quick search</span>
      <svg class="ml-auto" width="62" height="40" viewBox="0 0 62 40"><ellipse cx="31" cy="33.500" rx="26.500" ry="4.500" fill="#b5bf4e"/><g fill="#a8741f"><path d="M9 32Q1 27 1 20q5 3 6 8 0-8 3-12 3 8 1 16zM54 32q-3-9 1-14 2 4 1 9 2-6 5-7 0 8-5 12z"/></g><path d="M48 30q3-10-1-25M14 28q-2-8 1-13" fill="none" stroke="#8a5a1c" stroke-width="1.300"/><path d="M17 34q-2-8 2-14l-1-5q-1-7 4-7.500 6 .5 5 7.500l-1 4q5 7 3 15z" fill="#c89b62"/><path d="M32 34q-2-10 3-17l-2-4q-3-10 5.500-10.500Q47 3 44 13l-2 4q7 8 4 17z" fill="#c89b62"/><path d="M21 30q-1-6 1-9 3 3 3 9zM36 31q-1-8 2.500-11Q42 24 41 31z" fill="#ecd3a4"/><g fill="#4a3320"><circle cx="20.500" cy="12" r="1.500"/><circle cx="25" cy="12" r="1.500"/><circle cx="35.800" cy="8.500" r="2"/><circle cx="41.200" cy="8.500" r="2"/><circle cx="38.500" cy="12" r="1.200"/><circle cx="32.500" cy="5.500" r="1"/><circle cx="44.500" cy="5.500" r="1"/></g></svg>
    </div>
    <div class="ml-[3px] flex h-full items-center">
      <div class="w-[55px] grid place-items-center"><svg width="30" height="30" viewBox="0 0 30 30"><path d="M0 9.500h22V29H2q-2 0-2-2z" fill="#666769"/><rect x="7.500" width="22.500" height="24.500" rx="1.500" fill="#f1f1f1"/><path d="M7.500 9.500H22v15H9q-1.500 0-1.500-1.500z" fill="#a9a9a9"/></svg></div>
      <div class="w-[55px] grid place-items-center"><svg width="29" height="30" viewBox="0 0 29 30"><defs><linearGradient id="c1" x1="0" y1="0" x2="0" y2="1"><stop stop-color="#1f9cf0"/><stop offset=".45" stop-color="#27a4d8"/><stop offset=".7" stop-color="#8bc34a"/><stop offset="1" stop-color="#f5c330"/></linearGradient><linearGradient id="c2" x1="0" y1="0" x2="0" y2="1"><stop stop-color="#8a6cf0"/><stop offset=".5" stop-color="#e25aa8"/><stop offset="1" stop-color="#ff8a4a"/></linearGradient></defs><path d="M7.500 2H16q2.500 0 3.500 3l1 3h-3.500q-2.500 0-3.500 3l-3 10q-1 3-4 3H5q-6 0-4-7L4 6q1-4 3.500-4z" fill="url(#c1)"/><path d="M21.500 28H13q-2.500 0-3.500-3l-1-3h3.500q2.500 0 3.500-3l3-10q1-3 4-3H24q6 0 4 7l-3 11q-1 4-3.500 4z" fill="url(#c2)"/><path d="M10 2h6q2.500 0 3.500 3l1 3h-3.500q-2.500 0-3.500-3z" fill="#1c55c9"/></svg></div>
      <div class="w-[55px] grid place-items-center"><svg width="30" height="36" viewBox="0 0 30 36"><path d="M8 8V4.500Q8 2 10 2h10q2 0 2 2.500V8" fill="none" stroke="#27a9e8" stroke-width="2"/><path d="M.5 6.500h29V32q0 4-4 4h-21q-4 0-4-4z" fill="#f4f4f4"/><path d="M9 14.500h5.500v6H9z" fill="#f25022"/><path d="M15.500 14.500H21v6h-5.500z" fill="#7fba00"/><path d="M9 21.500h5.500v6H9z" fill="#00a4ef"/><path d="M15.500 21.500H21v6h-5.500z" fill="#ffb900"/></svg></div>
      <div class="relative w-[55px] grid place-items-center"><svg width="30" height="32" viewBox="0 0 30 32"><path d="M0 2q0-1.500 1.500-1.500H9L12 4v5H0z" fill="#e09b0a"/><path d="M0 7.500h11L13 4.500h15.500Q30 4.500 30 6v24q0 2-2 2H2q-2 0-2-2z" fill="#ffcd3f"/><path d="M5 32v-5q0-3 3-3h14q3 0 3 3v5z" fill="#1179cf"/><path d="M8.500 28h13" stroke="#0b4f8f" stroke-width="1.600"/></svg><i class="absolute top-[36px] left-[23.500px] w-2 h-1 rounded-full bg-[#9a9b9e]"></i></div>
      <div class="relative w-[55px] h-full">
        <div class="absolute left-1 top-1 w-[49px] h-[50px] rounded-md bg-[#272e36] border border-[#363d44]"></div>
        <div class="absolute left-[3px] top-1 w-[44px] h-[50px] rounded-md bg-[#2d343b] border border-[#40464d]"></div>
        <svg class="absolute left-3 top-[14px]" width="31" height="31" viewBox="0 0 30 30"><circle cx="15" cy="15" r="15" fill="#fbc116"/><path d="M15 15 2 7.500A15 15 0 0 0 14 30l7.500-12z" fill="#27a048"/><path d="M2 7.500A15 15 0 0 1 28 7.500H15l-6.500 11z" fill="#e94335"/><circle cx="15" cy="15" r="7" fill="#fff"/><circle cx="15" cy="15" r="5.600" fill="#3f7fe8"/></svg>
        <svg class="absolute left-[29px] top-[8px]" width="20" height="22" viewBox="0 0 26 26" preserveAspectRatio="none"><use href="#avatar"/></svg>
        <i class="absolute top-[49px] left-[17.500px] w-5 h-1 rounded-full bg-[#29eeff]"></i>
      </div>
      <div class="w-[55px] grid place-items-center"><svg width="30" height="30" viewBox="0 0 30 30"><defs><linearGradient id="e1" x1="0" y1="0" x2="1" y2=".5"><stop stop-color="#2bb3ee"/><stop offset=".6" stop-color="#2cc3c4"/><stop offset="1" stop-color="#63e04e"/></linearGradient></defs><path d="M0 14Q1 1 15 0q14 0 15 11.500 0 8-8.500 8-5 0-5-2 2.500-2 1.500-5Q16 8 10 8.500 3 9 0 16z" fill="url(#e1)"/><path d="M0 15Q1 8.500 8 8q8-.5 9.500 5-3-1.500-5 1-2.500 4 1 8.500 5 5.500 13.500 1.500Q23 30 15 30 1 29 0 15z" fill="#1173c9"/><path d="M11 14q-3 9 3.500 13 5 2.500 11-.5 1-1 1.500-2.500-8 3.500-13-1.500Q10 18 11 14z" fill="#0c4c96"/></svg></div>
      <div class="relative w-[55px] grid place-items-center"><svg width="30" height="30" viewBox="0 0 30 30"><circle cx="14" cy="14.500" r="12.300" fill="#388a35"/><circle cx="14" cy="14.500" r="13" fill="none" stroke="#388a35" stroke-width="2.500" stroke-dasharray="2.600 2"/><path d="M28.500 5q3 18-8 23.500-9 3-14-2-3-6 2-11 3-3 9-4 8-1 11-6.500z" fill="#75b84a"/><path d="M6.500 26.500Q19 24 25 13" fill="none" stroke="#2c7a2d" stroke-width="1.500"/></svg><i class="absolute top-[35px] left-[23.500px] w-2 h-1 rounded-full bg-[#9a9b9e]"></i></div>
      <div class="relative w-[55px] grid place-items-center"><svg width="30" height="30" viewBox="0 0 30 30"><rect width="30" height="30" rx="12" fill="#0b5cff"/><text x="15" y="18" text-anchor="middle" fill="#fff" font-size="9" font-weight="700" textLength="22">zoom</text></svg><i class="absolute top-[35px] left-[23.500px] w-2 h-1 rounded-full bg-[#9a9b9e]"></i></div>
      <div class="relative w-[55px] grid place-items-center"><svg width="30" height="30" viewBox="0 0 30 30"><path d="m22 0 7 3q1 .5 1 2v20q0 1.500-1 2l-7 3z" fill="#2aa4f0"/><path d="M22 0v8.500L4 22.500q-.7.500-1.300 0L.5 20.300q-.8-.8 0-1.500z" fill="#1583d0"/><path d="M22 30v-8.500L4 7.500q-.7-.5-1.300 0L.5 9.700q-.8.800 0 1.500z" fill="#0f70bb"/></svg><i class="absolute top-[35px] left-[23.500px] w-2 h-1 rounded-full bg-[#9a9b9e]"></i></div>
      <div class="relative w-[55px] grid place-items-center"><svg width="32" height="36" viewBox="0 0 32 36"><rect x="1" width="23" height="27" rx="3" fill="#f2f2f2"/><path d="M5.500 21V5.500H19" fill="none" stroke="#d8401c" stroke-width="4" stroke-dasharray="3.500 1.800"/><path d="M19 5v17h8M6 20.500h14" fill="none" stroke="#8e9499" stroke-width="2.500"/><g fill="none" stroke="#2196e3" stroke-width="2"><circle cx="28.500" cy="20" r="2.800"/><circle cx="17.500" cy="32" r="2.800"/><path d="m26 22-4 2M18 29v-5"/></g></svg><i class="absolute top-[38px] left-[23.500px] w-2 h-1 rounded-full bg-[#9a9b9e]"></i></div>
    </div>
    <div class="ml-auto flex items-center pr-6 pb-px">
      <svg width="14" height="9" viewBox="0 0 14 9" fill="none" stroke="#fff" stroke-width="1.800"><path d="M.8 8 7 1.500 13.200 8"/></svg>
      <svg class="ml-[21px]" width="26" height="22" viewBox="0 0 26 22" fill="none" stroke="#55d6e6" stroke-width="1.400"><rect x="3.700" y="1" width="4.600" height="9" rx="2.300"/><path d="M1 7q0 5 5 5t5-5M6 12v3.500M24.500 7 13.500 13.500l5 1 2.500 5z"/></svg>
      <div class="ml-[19px] w-[32px] pb-0.5 text-center tracking-[-.5px]">ENG<br>IN</div>
      <svg class="ml-[20px]" width="21" height="16" viewBox="0 0 21 16" fill="none" stroke="#fff" stroke-width="1.500"><path d="M.7 6.200Q10.500-3.500 20.300 6.200M3.500 9q7-6.700 14 0M6.500 11.800q4-3.800 8 0"/><circle cx="10.500" cy="13.800" r="1.500" fill="#fff" stroke="none"/></svg>
      <svg class="ml-[10px]" width="19" height="16" viewBox="0 0 19 16" fill="none" stroke="#fff" stroke-width="1.400"><path d="M.8 5.500h2.700L8 1v14l-4.500-4.500H.8zM10.500 5q2 3 0 6M12.800 3q3.700 5 0 10"/><path d="M15.500 1q5 7 0 14" stroke="#666"/></svg>
      <svg class="ml-[11px]" width="20" height="14" viewBox="0 0 20 14" fill="none" stroke="#fff" stroke-width="1.300"><rect x=".7" y=".7" width="16" height="12.400" rx="3"/><rect x="2.800" y="2.800" width="6.500" height="8.200" rx="1" fill="#fff" stroke="none"/><path d="M18.500 4.500v5" stroke-width="2"/></svg>
      <div class="ml-[20px] w-[64px] pb-0.5 text-right tracking-[-.14px] whitespace-nowrap">10:01 AM<br><span class="tracking-[-.05px]">7/3/2025</span></div>
    </div>
  </div>
</div>
</body>
</html>
